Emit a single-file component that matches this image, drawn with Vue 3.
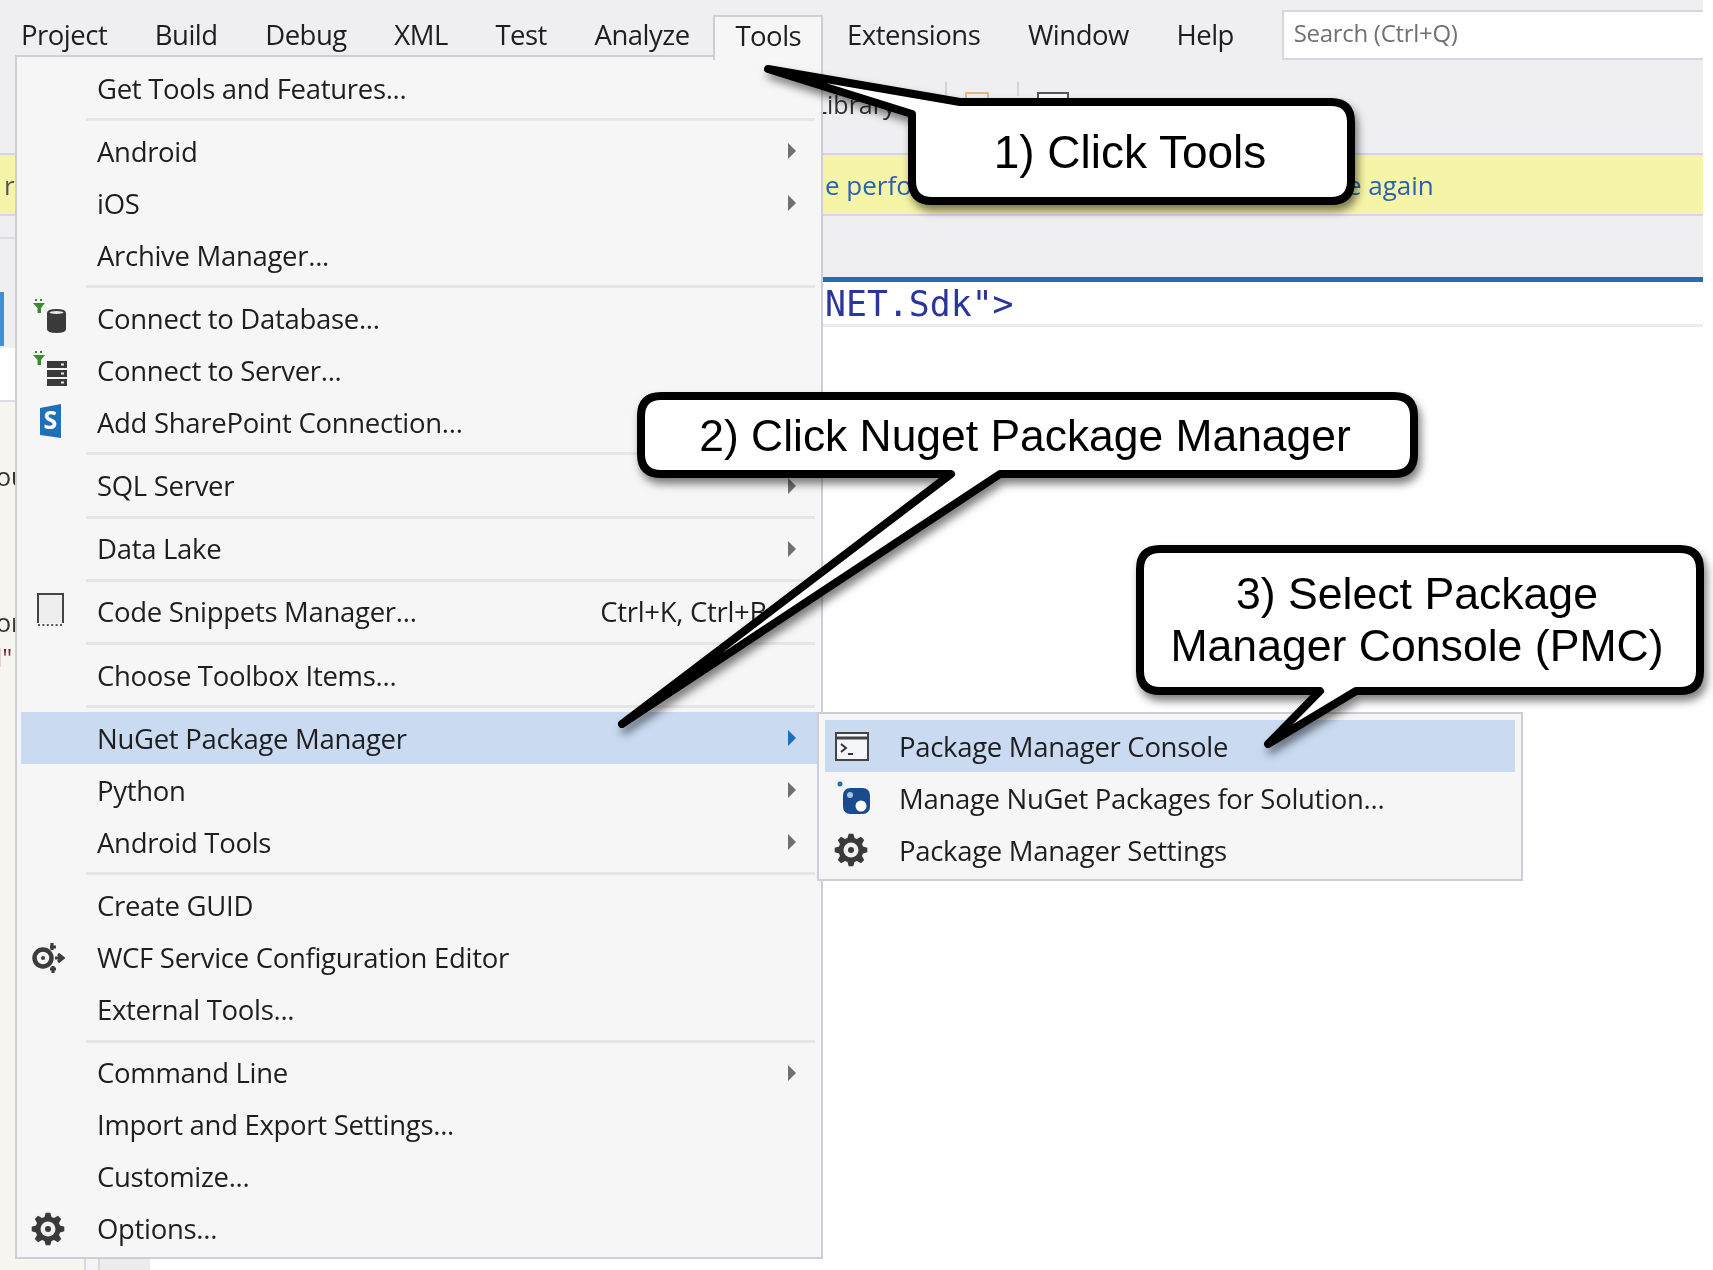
<script setup>
const menuBar = ['Project', 'Build', 'Debug', 'XML', 'Test', 'Analyze', 'Tools', 'Extensions', 'Window', 'Help']

// groups are split by separators
const toolsMenu = [
  [{ label: 'Get Tools and Features...' }],
  [{ label: 'Android', arrow: true }, { label: 'iOS', arrow: true }, { label: 'Archive Manager...' }],
  [{ label: 'Connect to Database...', icon: 'db' }, { label: 'Connect to Server...', icon: 'server' }, { label: 'Add SharePoint Connection...', icon: 'sp' }],
  [{ label: 'SQL Server', arrow: true }],
  [{ label: 'Data Lake', arrow: true }],
  [{ label: 'Code Snippets Manager...', icon: 'snippet', shortcut: 'Ctrl+K, Ctrl+B' }],
  [{ label: 'Choose Toolbox Items...' }],
  [{ label: 'NuGet Package Manager', arrow: true, open: true }, { label: 'Python', arrow: true }, { label: 'Android Tools', arrow: true }],
  [{ label: 'Create GUID' }, { label: 'WCF Service Configuration Editor', icon: 'wcf' }, { label: 'External Tools...' }],
  [{ label: 'Command Line', arrow: true }, { label: 'Import and Export Settings...' }, { label: 'Customize...' }, { label: 'Options...', icon: 'gear' }],
]

const subMenu = [
  { label: 'Package Manager Console', icon: 'console', active: true },
  { label: 'Manage NuGet Packages for Solution...', icon: 'nuget' },
  { label: 'Package Manager Settings', icon: 'gear' },
]

const callouts = [
  {
    size: 46,
    d: 'M960 102 H1331 Q1351 102 1351 122 V181 Q1351 201 1331 201 H932 Q912 201 912 181 V114 L768 69 Z',
    lines: [{ text: '1) Click Tools', x: 1130, y: 168 }],
  },
  {
    size: 44.4,
    d: 'M661 396 H1394 Q1414 396 1414 416 V454 Q1414 474 1394 474 H1000 L622 724 L951 474 H661 Q641 474 641 454 V416 Q641 396 661 396 Z',
    lines: [{ text: '2) Click Nuget Package Manager', x: 1025, y: 451 }],
  },
  {
    size: 44.6,
    d: 'M1160 549 H1680 Q1700 549 1700 569 V671 Q1700 691 1680 691 H1356 L1268 744 L1320 691 H1160 Q1140 691 1140 671 V569 Q1140 549 1160 549 Z',
    lines: [
      { text: '3) Select Package', x: 1417, y: 609 },
      { text: 'Manager Console (PMC)', x: 1417, y: 661 },
    ],
  },
]

// eight blunt teeth around a hole
function gearPath(cx, cy, outer, inner) {
  let d = ''
  const n = 8
  for (let i = 0; i < n; i++) {
    const a = (i / n) * Math.PI * 2 - Math.PI / 2
    const w = Math.PI / n
    const pts = [
      [inner, a - w * 0.72],
      [outer, a - w * 0.36],
      [outer, a + w * 0.36],
      [inner, a + w * 0.72],
    ]
    pts.forEach(([r, t], j) => {
      const x = (cx + r * Math.cos(t)).toFixed(1)
      const y = (cy + r * Math.sin(t)).toFixed(1)
      d += (i === 0 && j === 0 ? 'M' : 'L') + x + ' ' + y + ' '
    })
  }
  return d + 'Z'
}
const gear = gearPath(20, 20, 16.5, 12.5)
</script>

<template>
  <div class="page">
    <div class="shell">
      <header class="menubar">
        <span v-for="m in menuBar" :key="m" class="top-item" :class="{ open: m === 'Tools' }">{{ m }}</span>
        <div class="search">Search (Ctrl+Q)</div>
      </header>

      <div class="toolbar">
        <div class="toolbar-inner">
          <span class="tb-text">Library</span>
          <i class="tb-sep"></i>
          <i class="tb-icon orange"></i>
          <i class="tb-sep"></i>
          <i class="tb-icon dark"></i>
        </div>
      </div>

      <div class="infobar">
        <span class="info-left">r</span>
        <span class="info-link">e perfo</span>
        <span class="info-link again">e again</span>
      </div>

      <div class="workspace">
        <aside class="sidebar">
          <div class="side-head"></div>
          <div class="side-tab"><i></i></div>
          <div class="side-white"></div>
          <div class="side-tree">
            <div class="clip first">ou</div>
            <div class="clip second">or</div>
            <div class="clip third">l"</div>
          </div>
        </aside>
        <main class="editor">
          <div class="doc-tabs"></div>
          <div class="code-line"><span>NET.Sdk"&gt;</span></div>
          <div class="editor-body">
            <div class="margin-a"></div>
            <div class="margin-b"></div>
          </div>
        </main>
      </div>
    </div>

    <nav class="menu">
      <template v-for="(group, g) in toolsMenu" :key="g">
        <div v-if="g > 0" class="sep"></div>
        <div v-for="item in group" :key="item.label" class="row" :class="{ open: item.open }">
          <span class="slot">
            <svg v-if="item.icon" width="40" height="40" viewBox="0 0 40 40">
              <template v-if="item.icon === 'db'">
                <path d="M8 1 v2 M13 1 v2" stroke="#3d8b2f" stroke-width="2" />
                <path d="M5 5 H17 L13 10 V15 H9.500 V10 Z" fill="#3d8b2f" />
                <path d="M19 15 Q19 11 28.500 11 Q38 11 38 15 V31 Q38 35 28.500 35 Q19 35 19 31 Z" fill="#3a3a3a" />
                <ellipse cx="28.500" cy="14.500" rx="7" ry="1.500" fill="#e8e8e8" />
              </template>
              <template v-else-if="item.icon === 'server'">
                <path d="M8 1 v2 M13 1 v2" stroke="#3d8b2f" stroke-width="2" />
                <path d="M5 5 H17 L13 10 V15 H9.500 V10 Z" fill="#3d8b2f" />
                <g fill="#3a3a3a">
                  <rect x="19" y="11" width="20" height="7" />
                  <rect x="19" y="20" width="20" height="7" />
                  <rect x="19" y="29" width="20" height="7" />
                </g>
                <g fill="#e8e8e8">
                  <rect x="33" y="13.500" width="3" height="2" />
                  <rect x="33" y="22.500" width="3" height="2" />
                  <rect x="33" y="31.500" width="3" height="2" />
                </g>
              </template>
              <template v-else-if="item.icon === 'sp'">
                <path d="M12 6 L33 2 V36 L12 33 Z" fill="#1f70b8" />
                <text x="22.500" y="27" class="sp-letter">S</text>
              </template>
              <template v-else-if="item.icon === 'snippet'">
                <path d="M10 31 V2 H35 V31" fill="#eeeeee" stroke="#444" stroke-width="2" />
                <path d="M10 33 H35" stroke="#555" stroke-width="2" stroke-dasharray="2 2.400" />
              </template>
              <template v-else-if="item.icon === 'wcf'">
                <circle cx="15" cy="20" r="8.500" fill="none" stroke="#3c3c3c" stroke-width="4.500" />
                <circle cx="15" cy="20" r="2" fill="#3c3c3c" />
                <path d="M22 9 H28 M24 5 V12 M27 20 H34 M30 16 L35 20 L30 24 M22 31 H28 M25 28 V35" stroke="#3c3c3c" stroke-width="3.200" fill="none" />
              </template>
              <template v-else>
                <path :d="gear" fill="#3a3a3a" />
                <circle cx="20" cy="20" r="7.500" fill="#f1f1f1" />
                <circle cx="20" cy="20" r="3" fill="#3a3a3a" />
              </template>
            </svg>
          </span>
          <span class="label">{{ item.label }}</span>
          <span v-if="item.shortcut" class="shortcut">{{ item.shortcut }}</span>
          <span v-if="item.arrow" class="arrow"></span>

          <div v-if="item.open" class="submenu">
            <div v-for="sub in subMenu" :key="sub.label" class="sub-row" :class="{ active: sub.active }">
              <span class="sub-slot">
                <svg width="40" height="40" viewBox="0 0 40 40">
                  <template v-if="sub.icon === 'console'">
                    <rect x="5" y="7" width="32" height="27" fill="#f4f6fa" stroke="#444" stroke-width="2" />
                    <path d="M5 12 H37" stroke="#444" stroke-width="3" />
                    <path d="M10 18 L15 22 L10 26 M17 28 H22" stroke="#333" stroke-width="2" fill="none" />
                  </template>
                  <template v-else-if="sub.icon === 'nuget'">
                    <circle cx="9" cy="6" r="2.500" fill="#2a6cb0" />
                    <rect x="12" y="10" width="27" height="26" rx="7" fill="#1a4b8c" />
                    <circle cx="19" cy="17" r="3" fill="#a8c4e6" />
                    <circle cx="30" cy="28" r="5.500" fill="#ffffff" />
                  </template>
                  <template v-else>
                    <path :d="gear" fill="#3a3a3a" />
                    <circle cx="20" cy="20" r="7.500" fill="#f1f1f1" />
                    <circle cx="20" cy="20" r="3" fill="#3a3a3a" />
                  </template>
                </svg>
              </span>
              <span class="label">{{ sub.label }}</span>
            </div>
          </div>
        </div>
      </template>
    </nav>

    <svg class="callouts" width="1713" height="1270" viewBox="0 0 1713 1270">
      <g v-for="(c, i) in callouts" :key="i">
        <path class="bubble" :d="c.d" />
        <text v-for="l in c.lines" :key="l.text" class="bubble-text" :x="l.x" :y="l.y" :font-size="c.size">{{ l.text }}</text>
      </g>
    </svg>
  </div>
</template>

<style scoped>
.page {
  position: relative;
  width: 1713px;
  height: 1270px;
  overflow: hidden;
  background: #fff;
  font-family: "Open Sans", "Noto Sans", sans-serif;
  color: #1e1e1e;
  filter: blur(0.6px);
}
.shell {
  width: 1703px;
  height: 100%;
  display: flex;
  flex-direction: column;
}
.menubar {
  height: 60px;
  flex: none;
  display: flex;
  align-items: flex-start;
  background: #efeff2;
  font-size: 27.500px;
  letter-spacing: -0.500px;
}
.top-item {
  display: flex;
  align-items: center;
  box-sizing: border-box;
  height: 60px;
  padding: 8px 23.800px 0;
}
.top-item:first-child {
  padding-left: 21px;
}
.top-item.open {
  margin-top: 15px;
  height: 45px;
  background: #f6f6f6;
  border: 2px solid #ccced8;
  border-bottom: 0;
  padding: 0 20px 6px;
  position: relative;
  z-index: 2;
}
.search {
  margin: 10px 0 0 24px;
  flex: 1;
  height: 50px;
  box-sizing: border-box;
  background: #fff;
  border: 2px solid #d6d6de;
  border-right: 0;
  padding-left: 10px;
  font-size: 24px;
  letter-spacing: -0.300px;
  line-height: 42px;
  color: #717171;
}
.toolbar {
  height: 95px;
  flex: none;
  box-sizing: border-box;
  background: #efeff2;
  border-bottom: 2px solid #d4d4de;
}
.toolbar-inner {
  display: flex;
  align-items: flex-start;
  padding: 22px 0 0 814px;
}
.tb-text {
  font-size: 25px;
  margin: 5px 0 0 0;
  width: 131px;
  color: #333;
}
.tb-sep {
  width: 2px;
  height: 14px;
  background: #d4d4d4;
}
.tb-icon {
  height: 12px;
  box-sizing: border-box;
  margin-top: 10px;
}
.tb-icon.orange {
  width: 24px;
  margin-left: 18px;
  margin-right: 28px;
  border: 2px solid #e4b878;
}
.tb-icon.dark {
  width: 32px;
  margin-left: 18px;
  border: 2px solid #555;
  background: #f8f8f8;
}
.infobar {
  height: 61px;
  flex: none;
  box-sizing: border-box;
  display: flex;
  align-items: center;
  background: #f6f4a6;
  border-bottom: 2px solid #d8d6e0;
  font-size: 26px;
  color: #2a62b8;
}
.info-left {
  color: #555;
  width: 825px;
  padding-left: 4px;
  box-sizing: border-box;
}
.again {
  margin-left: 435px;
}
.workspace {
  flex: 1;
  display: flex;
  min-height: 0;
}
.sidebar {
  width: 86px;
  flex: none;
  display: flex;
  flex-direction: column;
  background: #f7f5f0;
  border-right: 2px solid #d8d8de;
  box-sizing: border-box;
}
.side-head {
  height: 21px;
  flex: none;
  background: #efeff2;
  border-bottom: 2px solid #dcdce4;
}
.side-tab {
  height: 109px;
  flex: none;
  box-sizing: border-box;
  padding-top: 53px;
  background: #efeff2;
}
.side-tab i {
  display: block;
  width: 4px;
  height: 54px;
  background: #3f8fd6;
}
.side-white {
  height: 52px;
  flex: none;
  background: #fff;
  border-bottom: 2px solid #dcdce4;
}
.side-tree {
  flex: 1;
  font-size: 25px;
}
/* only the first letters stick out from under the menu */
.clip {
  margin-left: -4px;
  white-space: nowrap;
  color: #333;
  line-height: 30px;
}
.clip.first {
  margin-top: 59px;
}
.clip.second {
  margin-top: 116px;
}
.clip.third {
  color: #7c1f42;
  margin-top: 5px;
}
.editor {
  flex: 1;
  display: flex;
  flex-direction: column;
  min-width: 0;
}
.doc-tabs {
  height: 61px;
  flex: none;
  background: #efeff2;
  border-bottom: 5px solid #1f6fb8;
}
.code-line {
  height: 45px;
  flex: none;
  box-sizing: border-box;
  padding-left: 739px;
  border-bottom: 3px solid #ececec;
  font-family: "DejaVu Sans Mono", "Liberation Mono", monospace;
  font-size: 34.800px;
  line-height: 44px;
  color: #2b369c;
}
.editor-body {
  flex: 1;
  display: flex;
}
.margin-a {
  width: 12px;
  background: #f4f4f4;
  border-right: 2px solid #d8d8de;
}
.margin-b {
  width: 50px;
  background: #ececec;
}

/* the dropped down Tools menu */
.menu {
  position: absolute;
  left: 15px;
  top: 55px;
  width: 808px;
  box-sizing: border-box;
  padding: 5px 2px 2px 4px;
  background: #f6f6f6;
  border: 2px solid #ccced8;
  font-size: 27.500px;
  letter-spacing: -0.300px;
}
.row {
  position: relative;
  height: 52px;
  display: flex;
  align-items: center;
}
.row.open {
  background: #c9daf1;
}
.slot {
  width: 76px;
  flex: none;
  display: flex;
  align-items: center;
  padding-left: 7px;
  box-sizing: border-box;
}
.label {
  white-space: nowrap;
}
.shortcut {
  margin-left: auto;
  margin-right: 52px;
  white-space: nowrap;
}
.arrow {
  position: absolute;
  right: 23px;
  top: 18px;
  width: 0;
  height: 0;
  border-left: 8px solid #707070;
  border-top: 8px solid transparent;
  border-bottom: 8px solid transparent;
}
.row.open .arrow {
  border-left-color: #1f6fb8;
}
.sep {
  height: 3px;
  margin: 4.100px 4px 4.100px 65px;
  background: #e6e6e8;
}
.sp-letter {
  font-family: "Open Sans", sans-serif;
  font-size: 25px;
  font-weight: 700;
  fill: #fff;
  text-anchor: middle;
  letter-spacing: 0;
}
.submenu {
  position: absolute;
  left: 796px;
  top: 0;
  width: 706px;
  box-sizing: border-box;
  padding: 6px 6px 3px 6px;
  background: #f6f6f6;
  border: 2px solid #ccced8;
  z-index: 3;
}
.sub-row {
  height: 52px;
  display: flex;
  align-items: center;
}
.sub-row.active {
  background: #c9daf1;
}
.sub-slot {
  width: 74px;
  flex: none;
  display: flex;
  align-items: center;
  padding-left: 6px;
  box-sizing: border-box;
}
.callouts {
  position: absolute;
  left: 0;
  top: 0;
  z-index: 5;
  pointer-events: none;
}
.bubble {
  fill: #fff;
  stroke: #000;
  stroke-width: 8px;
  stroke-linejoin: round;
  filter: drop-shadow(3px 6px 4px rgba(0, 0, 0, 0.5));
}
.bubble-text {
  font-family: "Liberation Sans", Arial, sans-serif;
  fill: #000;
  text-anchor: middle;
}
</style>
